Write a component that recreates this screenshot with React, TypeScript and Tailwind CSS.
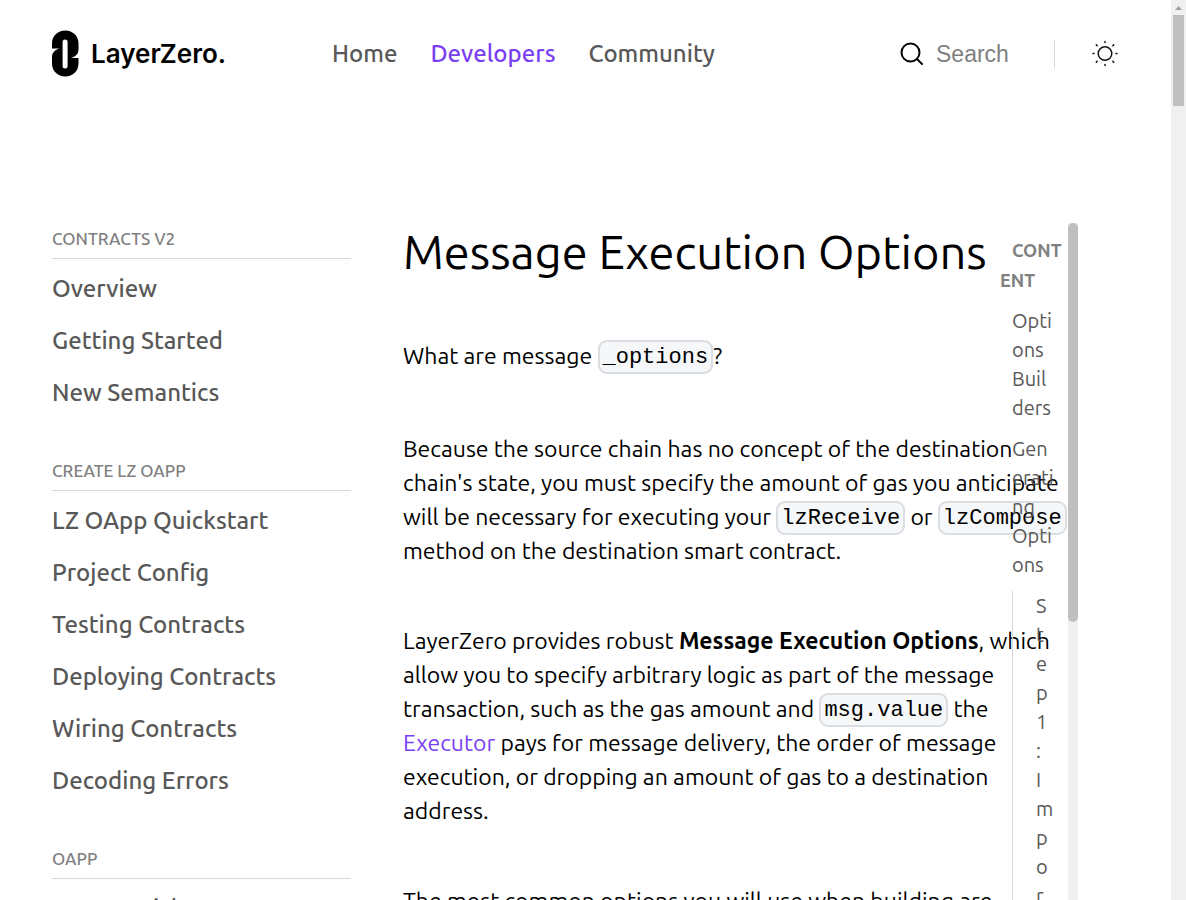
import type { ReactNode } from "react";

const sections = [
  { title: "CONTRACTS V2", items: ["Overview", "Getting Started", "New Semantics"] },
  {
    title: "CREATE LZ OAPP",
    items: [
      "LZ OApp Quickstart",
      "Project Config",
      "Testing Contracts",
      "Deploying Contracts",
      "Wiring Contracts",
      "Decoding Errors",
    ],
  },
  { title: "OAPP", items: ["OApp Quickstart"] },
];

const navItems = ["Home", "Developers", "Community"];

function Logo() {
  return (
    <a href="#" aria-label="LayerZero" className="flex items-center gap-3 text-black">
      <svg width="27" height="48" viewBox="0 1 27 48" aria-hidden="true">
        <path
          fill="currentColor"
          fillRule="evenodd"
          d="M0 19V14.500C0 7 5.600 1.500 13.300 1.500s13.200 5.500 13.200 13V20.500c0 4.500-3.600 8-8.200 8.500h8.200v5.500c0 7.500-5.600 13-13.200 13S0 42 0 34.500V28c0-4.500 3.600-8 8.200-8.500H0zM10.600 13v24a2.500 2.500 0 0 0 5 0v-24a2.500 2.500 0 0 0-5 0z"
        />
      </svg>
      <span className="font-[Inter,sans-serif] text-[26px] leading-8 font-semibold">LayerZero.</span>
    </a>
  );
}

function SearchIcon() {
  return (
    <svg width="24" height="24" viewBox="0 0 24 24" fill="none" stroke="#000" strokeWidth="2" aria-hidden="true">
      <circle cx="10.500" cy="10.500" r="9" />
      <path d="M17 17l5 5" strokeLinecap="round" />
    </svg>
  );
}

function SunIcon() {
  return (
    <svg width="28" height="28" viewBox="0 0.5 28 28" fill="none" stroke="#111" strokeWidth="1.500" aria-hidden="true">
      <circle cx="14" cy="14" r="6.800" />
      <path
        strokeLinecap="round"
        d="M14 2v1M14 25v1M2 14h1M25 14h1M5.300 5.300l.8.800M21.900 21.900l.8.800M5.300 22.700l.8-.8M21.900 6.100l.8-.8"
      />
    </svg>
  );
}

function Code({ children }: { children: ReactNode }) {
  return (
    <code className="rounded-[9px] border-2 border-[#dadde1] bg-[#f6f7f8] px-[3px] pt-[3px] pb-[2px] align-middle font-['Liberation_Mono',monospace] text-[22px] leading-none">
      {children}
    </code>
  );
}

export default function App() {
  return (
    <div className="flex h-screen overflow-hidden bg-white font-[Ubuntu,'Noto_Sans',sans-serif] text-black">
      <div className="flex min-w-0 flex-1 flex-col overflow-hidden pl-[52px]">
        <header className="flex h-[107px] shrink-0 items-center pr-[52px]">
          <div className="w-[280px] shrink-0">
            <Logo />
          </div>
          <nav className="flex gap-[33px] text-[24px] font-medium text-[#585858]">
            {navItems.map((item) => (
              <a key={item} href="#" className={item === "Developers" ? "text-[#7a3ff5]" : ""}>
                {item}
              </a>
            ))}
          </nav>
          <div className="ml-auto flex items-center">
            <label className="flex items-center gap-3">
              <SearchIcon />
              <input
                type="search"
                aria-label="Search"
                placeholder="Search"
                className="w-[118px] bg-transparent font-['Liberation_Sans',sans-serif] text-[23px] leading-7 outline-none placeholder:text-[#808080]"
              />
            </label>
            <div className="mr-9 h-7 w-px bg-[#d8d8d8]" />
            <button type="button" aria-label="Switch theme">
              <SunIcon />
            </button>
          </div>
        </header>

        <div className="flex min-h-0 flex-1 pt-[116px] pr-[93px]">
          <aside className="w-[299px] shrink-0 pt-1">
            {sections.map((section) => (
              <section key={section.title} className="mb-10">
                <h2 className="mb-1 border-b border-[#d8d8d8] pb-[7px] text-[17px] leading-6 font-medium text-[#808080]">
                  {section.title}
                </h2>
                <ul>
                  {section.items.map((item) => (
                    <li key={item}>
                      <a href="#" className="block text-[24px] leading-[52px] font-medium text-[#585858]">
                        {item}
                      </a>
                    </li>
                  ))}
                </ul>
              </section>
            ))}
          </aside>

          <main className="ml-[52px] min-w-0 flex-1">
            <article className="w-[112%] text-[23px] leading-[34px]">
              <h1 className="mb-[58px] text-[47px] leading-[58px] whitespace-nowrap">Message Execution Options</h1>
              <p className="mb-[59px]">
                What are message <Code>_options</Code>?
              </p>
              <p className="mb-14">
                Because the source chain has no concept of the destination chain's state, you must specify the amount of
                gas you anticipate will be necessary for executing your <Code>lzReceive</Code> or{" "}
                <Code>lzCompose</Code> method on the destination smart contract.
              </p>
              <p className="mb-14">
                LayerZero provides robust <strong>Message Execution Options</strong>, which allow you to specify
                arbitrary logic as part of the message transaction, such as the gas amount and <Code>msg.value</Code>{" "}
                the{" "}
                <a href="#" className="text-[#7a3ff5]">
                  Executor
                </a>{" "}
                pays for message delivery, the order of message execution, or dropping an amount of gas to a destination
                address.
              </p>
              <p>The most common options you will use when building are</p>
            </article>
          </main>

          <div className="z-10 flex w-[78px] shrink-0">
            <nav
              aria-label="Content"
              className="min-w-0 flex-1 overflow-hidden pt-3 text-[20px] leading-[29px] wrap-anywhere text-[#585858]"
            >
              <h2 className="mr-1 mb-[11px] text-[18px] leading-[30px] font-bold text-[#808080]">
                <span className="pl-3">CONTENT</span>
              </h2>
              <ul className="ml-3 flex flex-col gap-3">
                <li className="mr-3">
                  <a href="#">Options Builders</a>
                </li>
                <li className="mr-3">
                  <a href="#">Generating Options</a>
                </li>
                <li className="border-l border-[#d8d8d8] pr-5 pl-[23px]">
                  <a href="#">Step 1: Importing</a>
                </li>
              </ul>
            </nav>
            <div className="w-[10px] bg-[#f0f0f0]" aria-hidden="true">
              <div className="h-[59%] rounded-full bg-[#bfbfbf]" />
            </div>
          </div>
        </div>
      </div>

      <div className="w-[15px] shrink-0 bg-[#f0f0f0]" aria-hidden="true">
        <svg width="15" height="15" viewBox="0 0 15 15">
          <path d="M4 10l3.500-4L11 10z" fill="#a0a0a0" />
        </svg>
        <div className="mx-[2px] h-[91px] bg-[#bfbfbf]" />
      </div>
    </div>
  );
}
